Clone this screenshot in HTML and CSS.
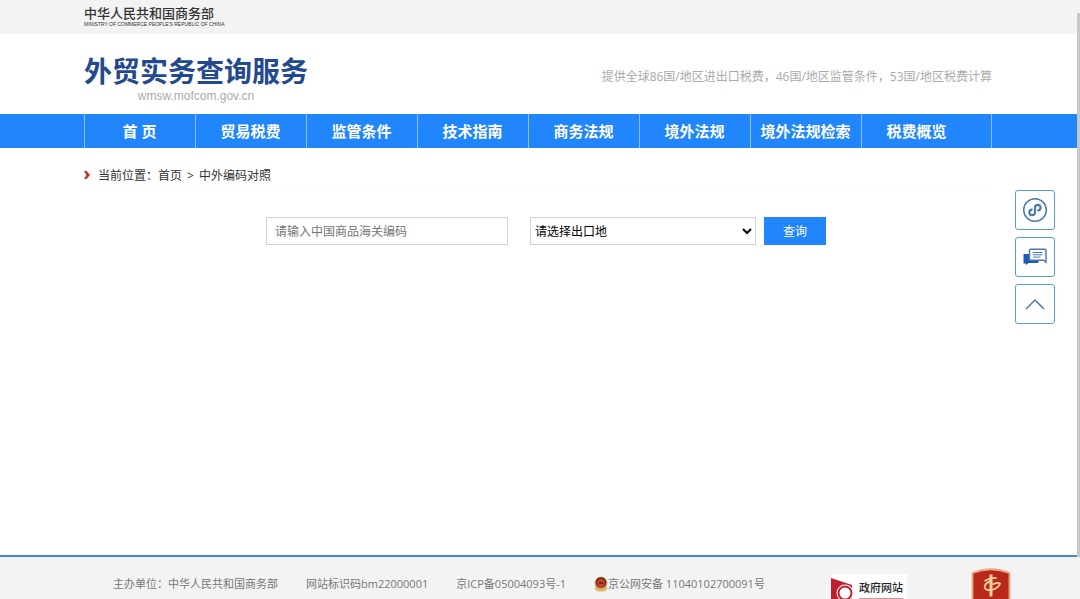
FILE: index.html
```
<!DOCTYPE html>
<html lang="zh-CN">
<head>
    <meta charset="UTF-8">
    <meta name="viewport" content="width=device-width, initial-scale=1.0">
    <title>中外编码对照 - 外贸实务查询服务</title>
    <link rel="stylesheet" href="styles.css">
</head>
<body>
    <div class="top-bar">
        <div class="container">
            <a href="#" class="ministry">
                <span class="ministry-cn">中华人民共和国商务部</span>
                <span class="ministry-en">MINISTRY OF COMMERCE PEOPLE'S REPUBLIC OF CHINA</span>
            </a>
        </div>
    </div>

    <header class="header">
        <div class="container header-inner">
            <a href="#" class="logo">
                <span class="logo-title">外贸实务查询服务</span>
                <span class="logo-url">wmsw.mofcom.gov.cn</span>
            </a>
            <p class="slogan">提供全球86国/地区进出口税费，46国/地区监管条件，53国/地区税费计算</p>
        </div>
    </header>

    <nav class="nav">
        <ul class="container nav-list">
            <li><a href="#">首 页</a></li>
            <li><a href="#">贸易税费</a></li>
            <li><a href="#">监管条件</a></li>
            <li><a href="#">技术指南</a></li>
            <li><a href="#">商务法规</a></li>
            <li><a href="#">境外法规</a></li>
            <li><a href="#">境外法规检索</a></li>
            <li><a href="#">税费概览</a></li>
        </ul>
    </nav>

    <main class="container main">
        <div class="breadcrumb">
            <svg class="breadcrumb-icon" viewBox="0 0 6 8" aria-hidden="true">
                <path d="M0 0h2.6L6 4 2.6 8H0l2.4-4z" fill="#c9302c"/>
            </svg>
            <span>当前位置：</span>
            <a href="#">首页</a>
            <span class="breadcrumb-sep">&gt;</span>
            <a href="#">中外编码对照</a>
        </div>
        <form class="search-form">
            <input type="text" class="search-input" placeholder="请输入中国商品海关编码" aria-label="中国商品海关编码">
            <select class="search-select" aria-label="出口地">
                <option>请选择出口地</option>
            </select>
            <button type="submit" class="search-btn">查询</button>
        </form>
    </main>

    <aside class="side-tools">
        <a href="#" class="side-btn" aria-label="小程序">
            <svg width="26" height="26" viewBox="0 0 26 26" fill="none" stroke="#4a7ba8">
                <circle cx="13" cy="13" r="11.3" stroke-width="1.5"/>
                <path d="M9.8 12.6a2.8 2.8 0 1 0 3.2 2.8v-4.800a2.8 2.8 0 1 1 3.200 2.8" stroke-width="2.1" stroke-linecap="round"/>
            </svg>
        </a>
        <a href="#" class="side-btn" aria-label="留言">
            <svg width="24" height="18" viewBox="0 0 24 18" fill="none">
                <path d="M.5 6H7v6.500h8.500V15H5.500L3 17l-.5-1.500h-2z" fill="#1f5cb5"/>
                <path d="M7.500 1.200h14.500a1 1 0 0 1 1 1v12l-2.500-2h-13a1 1 0 0 1-1-1v-9a1 1 0 0 1 1-1z" fill="#fff" stroke="#4a7ba8" stroke-width="1.400"/>
                <path d="M10 4.500h9.500M10 6.800h9.500M10 9.100h7.500" stroke="#4a7ba8"/>
            </svg>
        </a>
        <a href="#" class="side-btn" aria-label="返回顶部">
            <svg width="20" height="12" viewBox="0 0 20 12" fill="none" stroke="#4a7ba8" stroke-width="1.500">
                <path d="M1 11l9-9 9 9"/>
            </svg>
        </a>
    </aside>

    <footer class="footer">
        <div class="container footer-inner">
            <div class="footer-info">
                <span>主办单位：中华人民共和国商务部</span>
                <span>网站标识码bm22000001</span>
                <a href="#">京ICP备05004093号-1</a>
                <a href="#" class="police">
                    <svg width="14" height="16" viewBox="0 0 14 16" aria-hidden="true">
                        <path d="M2 9h10l1.500 4-3 2.500h-7L.5 13z" fill="#dfb765"/>
                        <circle cx="7" cy="7" r="6.500" fill="#d9a860"/>
                        <circle cx="7" cy="6.500" r="5.300" fill="#4a2a26"/>
                        <circle cx="7" cy="7" r="4.200" fill="#cf3a26"/>
                        <path d="M4.500 8l1-2h3l1 2z" fill="#6d2a20"/>
                    </svg>
                    <span>京公网安备 11040102700091号</span>
                </a>
            </div>
            <a href="#" class="gov-badge">
                <svg width="24" height="26" viewBox="0 0 24 26" aria-hidden="true">
                    <path d="M0 1l21 7v18H0z" fill="#c01f2e"/>
                    <circle cx="14" cy="16" r="8.500" fill="#fff"/>
                    <circle cx="14" cy="16" r="6.500" fill="none" stroke="#c01f2e" stroke-width="2"/>
                </svg>
                <span>政府网站</span>
            </a>
            <a href="#" class="party-badge" aria-label="党政机关">
                <svg width="40" height="44" viewBox="0 0 40 44">
                    <path d="M1.500 5Q20-2.500 38.500 5v31L20 43 1.500 36z" fill="#b8281c" stroke="#eba883" stroke-width="1.800"/>
                    <path d="M20 6.500v22" fill="none" stroke="#f6cf9a" stroke-width="3"/>
                    <path d="M13.500 13q6-3.500 12-3M20 13.500c-7 1-8.500 8-3 8.500 5 .5 11-2.500 12-6.500-2-1.500-5-.5-8 1" fill="none" stroke="#f6cf9a" stroke-width="1.800"/>
                </svg>
            </a>
        </div>
    </footer>
    <div class="scroll-thumb"></div>
</body>
</html>
```
FILE: styles.css
```
:root {
    --blue: #2186fb;
    --gray-bg: #f3f3f3;
    --line: #5b9bd0;
}

* {
    margin: 0;
    padding: 0;
    box-sizing: border-box;
}

body {
    display: flex;
    flex-direction: column;
    height: 100vh;
    overflow: hidden;
    background: #fff;
    color: #333;
    font-family: "Open Sans", "Noto Sans CJK SC", sans-serif;
    font-size: 12px;
}

a {
    color: inherit;
    text-decoration: none;
}

.container {
    width: 100%;
    padding: 0 88px 0 84px;
}

.top-bar {
    height: 34px;
    flex-shrink: 0;
    padding-top: 5px;
    background: var(--gray-bg);
}

.ministry {
    display: inline-flex;
    flex-direction: column;
}

.ministry-cn {
    font-size: 13px;
    line-height: 16px;
    font-weight: 500;
}

.ministry-en {
    font-family: "Liberation Sans", sans-serif;
    font-size: 5px;
    line-height: 6px;
}

.header {
    height: 80px;
    flex-shrink: 0;
}

.header-inner {
    display: flex;
    justify-content: space-between;
    padding-top: 20px;
}

.logo {
    display: flex;
    flex-direction: column;
    align-items: center;
}

.logo-title {
    color: #23498f;
    font-size: 28px;
    line-height: 34px;
    font-weight: bold;
}

.logo-url {
    color: #aaa;
    font-family: "Liberation Sans", sans-serif;
    font-size: 12px;
    line-height: 16px;
}

.slogan {
    color: #aaa;
    line-height: 46px;
}

.nav {
    flex-shrink: 0;
    margin-right: 3px;
    background: var(--blue);
}

.nav-list {
    display: grid;
    grid-template-columns: repeat(7, 111fr) 131fr;
    padding-right: 85px;
    list-style: none;
}

.nav-list li {
    height: 34px;
    padding-right: 1px;
    border-left: 1px solid #8cc0fc;
}

.nav-list li:last-child {
    padding-right: 20px;
    border-right: 1px solid #8cc0fc;
}

.nav-list a {
    display: block;
    color: #fff;
    font-size: 15px;
    line-height: 34px;
    font-weight: bold;
    text-align: center;
    white-space: nowrap;
}

.main {
    flex: 1;
}

.breadcrumb {
    display: flex;
    align-items: center;
    height: 43px;
    padding-top: 12px;
    border-bottom: 1px solid #fafafa;
}

.breadcrumb-icon {
    width: 6px;
    height: 8px;
    margin-right: 8px;
}

.breadcrumb-sep {
    margin: 0 5px;
}

.search-form {
    display: flex;
    justify-content: center;
    padding: 26px 0 0 16px;
}

.search-input,
.search-select {
    height: 28px;
    border: 1px solid #d0d4d6;
    background: #fff;
    font-family: inherit;
    font-size: 12px;
}

.search-input {
    width: 242px;
    margin-right: 22px;
    padding: 0 8px;
}

.search-input::placeholder {
    color: #757575;
}

.search-select {
    width: 226px;
    margin-right: 8px;
    color: #000;
}

.search-btn {
    width: 62px;
    height: 28px;
    border: none;
    background: var(--blue);
    color: #fff;
    font-family: inherit;
    font-size: 12px;
    cursor: pointer;
}

.side-tools {
    position: fixed;
    top: 190px;
    right: 25px;
    display: flex;
    flex-direction: column;
    gap: 7px;
}

.side-btn {
    display: flex;
    justify-content: center;
    align-items: center;
    width: 40px;
    height: 40px;
    border: 1px solid var(--line);
    border-radius: 3px;
    background: #fff;
}

.footer {
    height: 44px;
    flex-shrink: 0;
    overflow: hidden;
    border-top: 2px solid #4889bd;
    background: var(--gray-bg);
    color: #777;
    font-size: 11px;
}

.footer-inner {
    display: flex;
    align-items: flex-start;
    padding: 11px 69px 0 113px;
}

.footer-info {
    display: flex;
    gap: 28px;
    line-height: 32px;
    white-space: nowrap;
}

.police {
    display: flex;
    align-items: center;
}

.gov-badge {
    display: flex;
    height: 40px;
    margin: 6px 0 0 auto;
    padding: 3px 4px 0 0;
    background: #fff;
    color: #222;
    font-weight: 500;
}

.gov-badge span {
    height: 22px;
    margin-left: 4px;
    border-bottom: 1px solid #c99;
    line-height: 22px;
}

.party-badge {
    margin-left: 64px;
}

.scroll-thumb {
    position: fixed;
    top: 13px;
    right: 0;
    bottom: 42px;
    width: 3px;
    background: #c8c8c8;
}
```
